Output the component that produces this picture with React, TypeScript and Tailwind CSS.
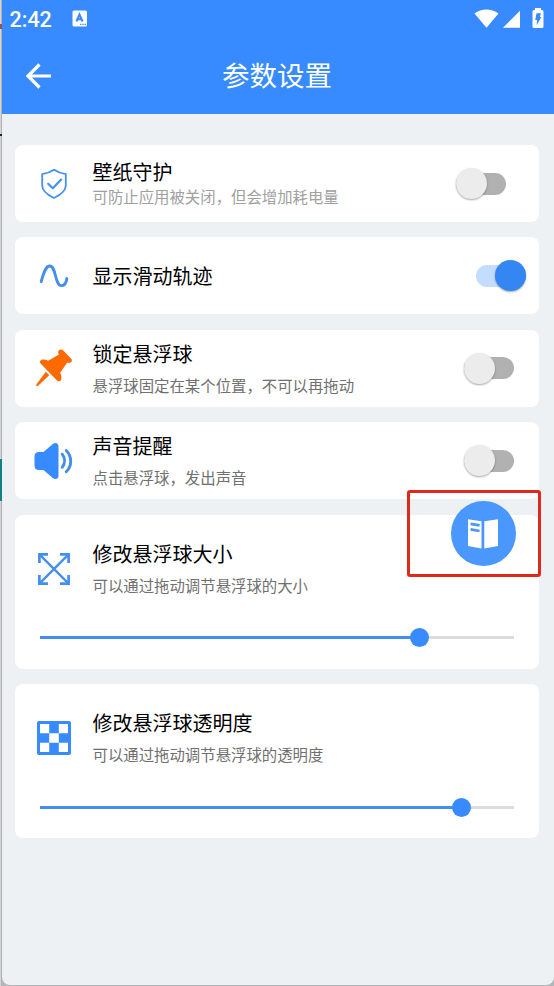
import React from 'react';
import clsx from 'clsx';

const BLUE = '#388bfe';

function ShieldIcon() {
  return (
    <svg width="28" height="32" viewBox="0 0 28 32" fill="none" stroke="#4590f0" strokeWidth="1.8" strokeLinejoin="round">
      <path d="M14 1.800C10.500 4.200 6.500 5.500 2.200 6.100V17.500C2.200 23 7 26.600 14 30C21 26.600 25.800 23 25.800 17.500V6.100C21.500 5.500 17.500 4.200 14 1.800Z" />
      <path d="M8.200 15.800L12.800 20.200L21.200 11.600" strokeWidth="2.200" strokeLinecap="round" />
    </svg>
  );
}

function WaveIcon() {
  return (
    <svg width="30" height="26" viewBox="0 0 30 26" fill="none" stroke="#448eef" strokeWidth="2.900" strokeLinecap="round">
      <path d="M2.200 18.500C4.800 9 6.800 3.200 10.500 3C17.500 2.600 15.500 22.300 22.300 22.600C25.800 22.600 27.400 19.500 27.800 15.500" />
    </svg>
  );
}

function PinIcon() {
  return (
    <svg width="38" height="40" viewBox="0 0 38 40" fill="#ff6a00">
      <path d="M23.700 2.500C25.200 1 27 1.400 28.200 2.600L36 10.400C37.200 11.600 37.200 13.200 36 14.200C35 15.200 33.500 15.200 32.200 14.600L25.200 24.800C26.600 28 26.800 30.500 26 32C25 33.600 23.300 33.700 22 32.400L5.800 15.800C4.500 14.500 4.700 12.700 6.200 12C8 11.100 10.500 11.500 13.200 12.800L24 6.500C23 5.300 22.800 3.700 23.700 2.500Z" />
      <path d="M10.800 23.800L14.200 27.200L3.400 37.400C2.200 38.500 0.500 37.900 1.500 36.300Z" />
    </svg>
  );
}

function SpeakerIcon() {
  return (
    <svg className="mr-px" width="40" height="38" viewBox="0 0 40 38" fill="none">
      <path
        fill={BLUE}
        d="M6 10H10.500L19.500 2.200C22.500 -0.200 25.500 0.800 25.500 4.500V33.500C25.500 37.200 22.500 38.200 19.500 35.800L10.500 28H6C3 28 1.500 26.500 1.500 23.500V14.500C1.500 11.500 3 10 6 10Z"
      />
      <path d="M29.200 12.200C32.300 16.200 32.300 21.300 29.200 25.300M33.200 8.500C39.200 14.500 39.200 23.800 33.200 29.800" stroke="#448eef" strokeWidth="2.900" strokeLinecap="round" />
    </svg>
  );
}

function ResizeIcon() {
  return (
    <svg width="34" height="34" viewBox="0 0 34 34" fill="none" stroke="#448eef" strokeWidth="2.700">
      <path d="M2.400 11V2.400H11M23 2.400H31.600V11M31.600 23V31.600H23M11 31.600H2.400V23" />
      <path d="M2.400 2.400L31.600 31.600M31.600 2.400L2.400 31.600" strokeWidth="2.300" />
    </svg>
  );
}

function CheckerIcon() {
  return (
    <svg width="34" height="34" viewBox="0 0 34 34">
      <rect width="34" height="34" rx="2" fill={BLUE} />
      <path fill="#fff" d="M3 3h9.200v9.200H3zM21.800 3h9.200v9.200h-9.200zM12.200 12.200h9.600v9.600h-9.600zM3 21.800h9.200v9.200H3zM21.800 21.800h9.200v9.200h-9.200z" />
    </svg>
  );
}

function BookIcon() {
  return (
    <svg className="mr-px" width="30" height="30" viewBox="0 0 30 30">
      <path fill="#fff" d="M0 0.200L13.500 2.300V29.500L0 27ZM16.300 2.300L30 0.200V27L16.300 29.500Z" />
      <path d="M2.600 4.800L11.600 6.400M2.600 10.400L11.600 12" stroke="#4a97fe" strokeWidth="2.700" />
    </svg>
  );
}

function StatusBar() {
  return (
    <div className="flex h-[38px] items-center pl-[7.5px] pr-[9px] text-white">
      <span className="pt-[2px] font-[Roboto] text-[21.5px] font-medium leading-[38px]">2:42</span>
      <svg className="mb-px ml-[20px]" width="16" height="17" viewBox="0 0 16 17">
        <rect x="0.500" y="0.500" width="14.500" height="16" rx="1.500" fill="#fff" />
        <path d="M4.400 11.500L7.500 4.500L10.600 11.500M5.500 9.300H9.500" fill="none" stroke={BLUE} strokeWidth="2" />
        <path d="M8 14.300H9.300M10.300 14.300H11.600M12.600 14.300H13.900" stroke={BLUE} strokeWidth="1.200" />
      </svg>
      <svg className="ml-auto" width="71" height="22" viewBox="0 0 71 22" fill="#fff">
        <path d="M0.500 5.500C7.500 0 17.500 0 24.500 5.500L12.500 19.700Z" />
        <path d="M46 2.800V19.800H29Z" />
        <path d="M61 0H67V2H68Q69.500 2 69.500 3.500V18.500Q69.500 20 68 20H60Q58.500 20 58.500 18.500V3.500Q58.500 2 60 2H61Z" />
        <path d="M62.500 5.200H67L65.800 9H67.500L62.600 17.300L63.200 12H61.200Z" fill={BLUE} />
      </svg>
    </div>
  );
}

function Toggle({ on = false }: { on?: boolean }) {
  return (
    <div
      className={clsx(
        'flex h-[22px] w-[50px] shrink-0 items-center rounded-full',
        on ? 'justify-end bg-[#c3dcff]' : 'bg-[#b1b1b1]'
      )}
    >
      <div
        className={clsx(
          'size-[31px] shrink-0 rounded-full shadow-[0_1px_2px_rgba(0,0,0,0.35)]',
          on ? 'bg-[#3487f3]' : 'bg-[#ececec]'
        )}
      />
    </div>
  );
}

function Slider({ value }: { value: number }) {
  return (
    <div className="mx-[25px] flex h-[19px] items-center">
      <div className="h-[3px] bg-[#448eef]" style={{ width: `${value}%` }} />
      {/* z-10 keeps the knob above the rest of the track */}
      <div className="z-10 -mx-[9.5px] size-[19px] shrink-0 rounded-full bg-[#388bfe]" />
      <div className="h-[3px] flex-1 bg-[#dcdcdc]" />
    </div>
  );
}

interface RowProps {
  icon: React.ReactNode;
  title: string;
  subtitle?: string;
  tight?: boolean;
  children?: React.ReactNode;
}

function Row({ icon, title, subtitle, tight, children }: RowProps) {
  return (
    <div className="flex h-[77px] items-center">
      <div className="flex w-[77.5px] shrink-0 items-center justify-center">{icon}</div>
      <div className={clsx('flex-1', tight ? 'pt-[1px]' : 'pt-[3px]')}>
        <p className="text-[20px] leading-[24px] text-black">{title}</p>
        {subtitle && (
          <p className={clsx('text-[15.4px] leading-[20px]', tight ? 'mt-[3px] text-[#a0a0a0]' : 'mt-[10px] text-[#707070]')}>
            {subtitle}
          </p>
        )}
      </div>
      {children}
    </div>
  );
}

function Card({ children, tall }: { children: React.ReactNode; tall?: boolean }) {
  return <div className={clsx('rounded-[8px] bg-white', tall ? 'h-[154px] pt-[15.5px]' : 'h-[77px]')}>{children}</div>;
}

export default function App() {
  return (
    <div className="relative flex h-[986px] w-[554px] overflow-hidden bg-[#b4b6b8] font-['Liberation_Sans','Noto_Sans_CJK_SC',sans-serif]">
      {/* Sliver of the window behind the emulator */}
      <div className="flex w-[2px] shrink-0 flex-col border-r border-[#b0b1b2] bg-[#d4d5d6]">
        <div className="mt-[24px] h-[5px] w-[2px] bg-[#8a5560]" />
        <div className="mt-[105px] h-[2px] w-[2px] bg-[#222]" />
        <div className="mt-[323px] h-[42px] w-[2px] bg-[#158083]" />
      </div>

      <div className="h-[985px] flex-1 overflow-hidden rounded-b-[8px] bg-[#edf1f4]">
        <header className="h-[114px] bg-[#388bfe]">
          <StatusBar />
          <div className="flex h-[76px] items-center pl-[23px] pr-[25px] text-white">
            <svg className="mb-px" width="27" height="26" viewBox="0 0 27 26" fill="none" stroke="currentColor" strokeWidth="3.2">
              <path d="M14.500 1.500L3 13L14.500 24.500M2.500 13H26" />
            </svg>
            <h1 className="flex-1 pt-[2px] text-center text-[27.5px] leading-[40px]">参数设置</h1>
            <div className="w-[27px]" />
          </div>
        </header>

        <main className="flex flex-col gap-[15.4px] pl-[13px] pr-[15px] pt-[31px]">
          <Card>
            <Row icon={<ShieldIcon />} title="壁纸守护" subtitle="可防止应用被关闭，但会增加耗电量" tight>
              <div className="mr-[33px]"><Toggle /></div>
            </Row>
          </Card>
          <Card>
            <Row icon={<WaveIcon />} title="显示滑动轨迹">
              <div className="mr-[13px]"><Toggle on /></div>
            </Row>
          </Card>
          <Card>
            <Row icon={<PinIcon />} title="锁定悬浮球" subtitle="悬浮球固定在某个位置，不可以再拖动">
              <div className="mr-[25px]"><Toggle /></div>
            </Row>
          </Card>
          <Card>
            <Row icon={<SpeakerIcon />} title="声音提醒" subtitle="点击悬浮球，发出声音">
              <div className="mr-[25px]"><Toggle /></div>
            </Row>
          </Card>
          <Card tall>
            <Row icon={<ResizeIcon />} title="修改悬浮球大小" subtitle="可以通过拖动调节悬浮球的大小" />
            <div className="mt-[21px]"><Slider value={80} /></div>
          </Card>
          <Card tall>
            <Row icon={<CheckerIcon />} title="修改悬浮球透明度" subtitle="可以通过拖动调节悬浮球的透明度" />
            <div className="mt-[21.5px]"><Slider value={89} /></div>
          </Card>
        </main>
      </div>

      {/* Floating ball and its highlight frame */}
      <div className="absolute left-[451px] top-[501px] z-20 flex size-[65px] items-center justify-center rounded-full bg-[#4a97fe]">
        <BookIcon />
      </div>
      <div className="absolute left-[407px] top-[490px] z-20 h-[87px] w-[134px] rounded-[3px] border-[3px] border-[#e0291d]" />
    </div>
  );
}
